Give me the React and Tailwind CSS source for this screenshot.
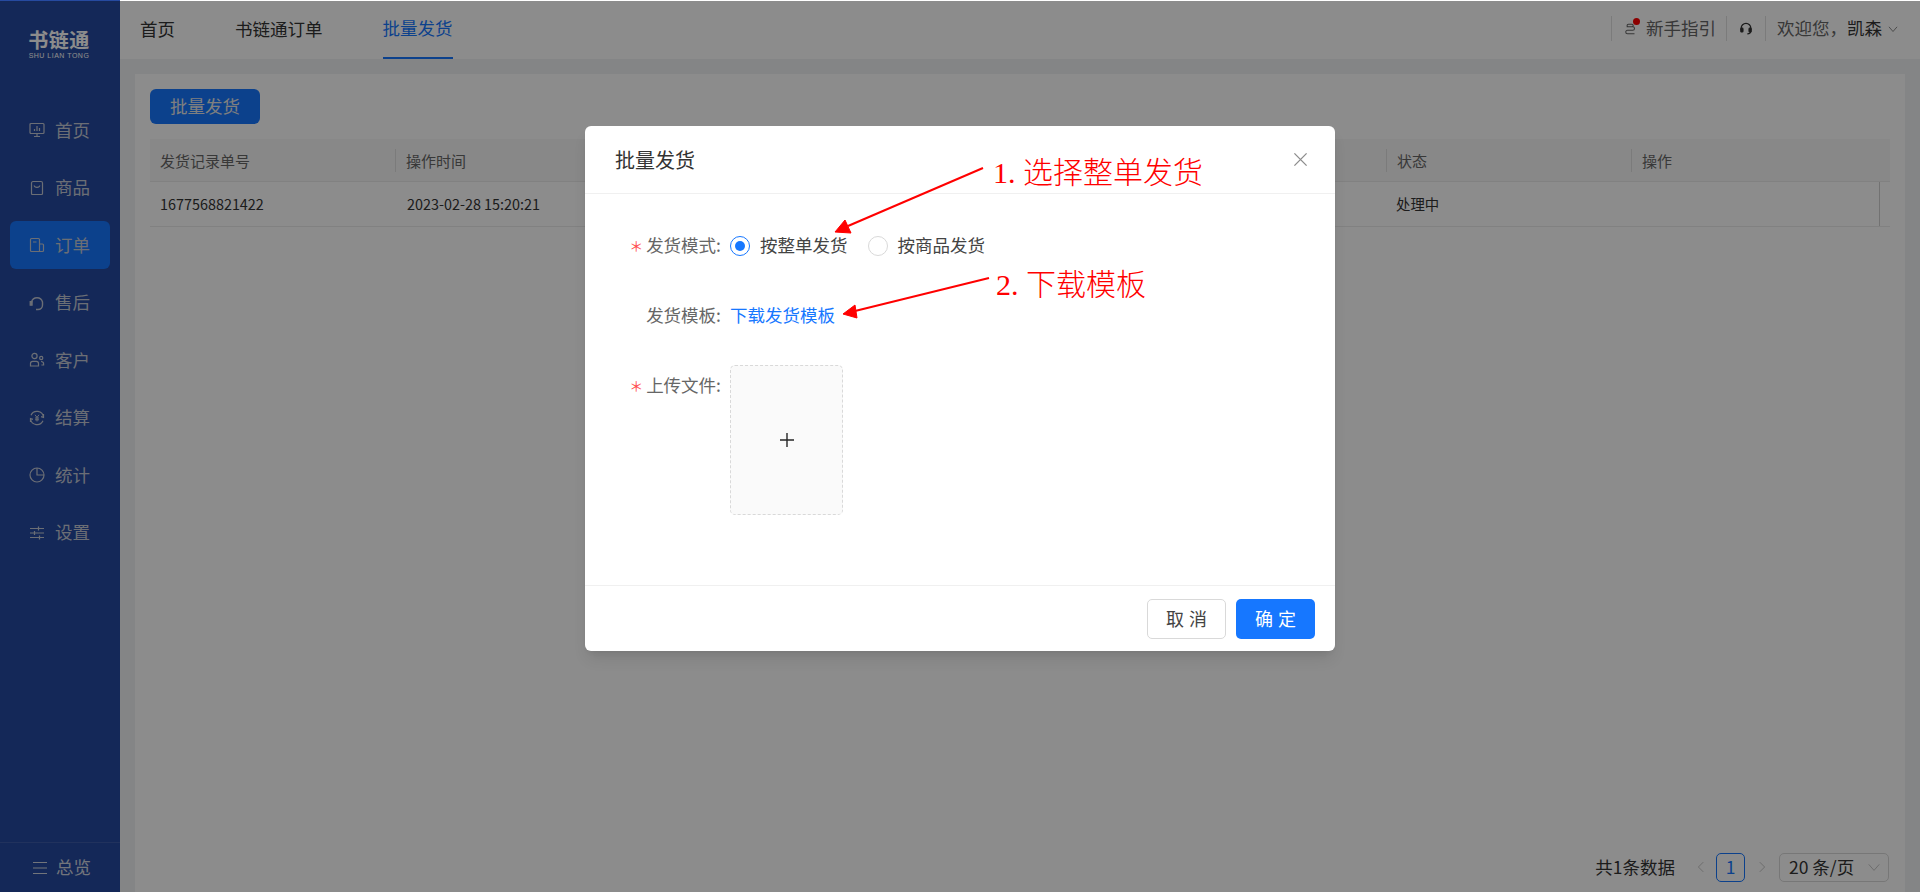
import React from "react";

const I = ({ children, className = "" }) => (
  <svg viewBox="0 0 16 16" fill="none" stroke="currentColor" strokeWidth="1.2" className={className}>{children}</svg>
);

const nav = [
  ["首页", <><rect x="1" y="1.5" width="14" height="10" rx="1" /><path d="M5 14.5h6M8 11.5v3M5.5 9V7M8 9V4M10.5 9V6" /></>],
  ["商品", <><path d="M2.5 3.2c0-.9.6-1.7 1.5-1.7h8c.9 0 1.5.8 1.5 1.7v10.3c0 .6-.4 1-1 1h-9c-.6 0-1-.4-1-1z" /><path d="M5.2 5.5c.4 2.4 5.2 2.4 5.6 0" /></>],
  ["订单", <><path d="M10.5 14.5h-8c-.6 0-1-.4-1-1v-11c0-.6.4-1 1-1h7c.6 0 1 .4 1 1z" /><path d="M10.5 7h3c.6 0 1 .4 1 1v5.5c0 .6-.4 1-1 1h-3M4 5h3.5" /></>],
  ["售后", <><path d="M2.5 8V7a5.7 5.7 0 0 1 11 0v3c0 2.4-1.8 4.5-4.5 4.5H7" strokeWidth="1.4" /><path d="M2.8 6.6h-1.6v3.6h1.9V6.6z" fill="currentColor" /></>],
  ["客户", <><circle cx="5.5" cy="4" r="2.6" /><path d="M1.5 14v-2.5c0-1.3 1-2.2 2.2-2.2h3.6c1.2 0 2.2.9 2.2 2.2V14z" /><circle cx="12.2" cy="6" r="1.6" /><path d="M12 9.5c1.4 0 2.6.8 2.6 2.2v1.3h-2.2" /></>],
  ["结算", <><path d="M2 5.2A6.6 6.6 0 0 1 14.5 7M14 10.8A6.6 6.6 0 0 1 1.5 9" /><path d="M14.5 4v3.4l-2.4-.8M1.5 12V8.6l2.4.8" /><path d="M6 4.8l2 2.6 2-2.6M8 7.4v4M6 8h4M6 9.8h4" strokeWidth="1" /></>],
  ["统计", <><circle cx="8" cy="8" r="7" /><path d="M8 1v7h7" /></>],
  ["设置", <path d="M1 3.5h14M1 8h14M1 12.5h14M9.5 1.5v4M5.5 6v4M10.5 10.5v4" />],
];

function Sidebar() {
  return (
    <aside className="flex w-[120px] shrink-0 flex-col bg-[#264aa0]">
      <div className="flex h-[106px] shrink-0 flex-col items-center pt-[27px] pr-[2px] text-white">
        <div className="text-[20px] leading-[25px] font-bold tracking-[0.5px]">书链通</div>
        <div className="text-[7px] leading-[8px] tracking-[0.5px] font-['Liberation_Sans',sans-serif]">SHU LIAN TONG</div>
      </div>
      <nav className="flex flex-1 flex-col gap-[9.5px]">
        {nav.map(([t, icon]) => (
          <div key={t} className={`mx-[10px] flex h-[48px] items-center gap-[10px] rounded-[6px] pl-[19px] text-[17.5px] text-[#c4c9d6] ${t === "订单" ? "bg-[#1677ff]" : ""}`}>
            <I className="h-[16px] w-[16px] shrink-0">{icon}</I>
            <span>{t}</span>
          </div>
        ))}
      </nav>
      <div className="flex h-[50px] shrink-0 items-center gap-[8px] border-t border-white/10 pl-[32px] text-[17.5px] text-[#d0d5e0]">
        <I className="h-[16px] w-[16px]"><path d="M1 2.5h14M1 8h14M1 13.5h14" /></I>
        <span>总览</span>
      </div>
    </aside>
  );
}

function TopBar() {
  return (
    <header className="flex h-[59px] shrink-0 items-start bg-white pl-[20px] text-[17.5px]">
      <div className="flex h-[59px] items-center text-[#333]">
        <span className="flex h-full items-center">首页</span>
        <span className="ml-[60px] flex h-full items-center">书链通订单</span>
        <span className="ml-[60px] flex h-full items-center border-b-[2px] border-[#1677ff] text-[#1677ff]">批量发货</span>
      </div>
      <div className="ml-auto flex h-[25px] mt-[16px] items-center pr-[22px] text-[#666]">
        <div className="relative flex h-full items-center border-l border-[#e0e0e0] pl-[12px] pr-[10px]">
          <I className="mr-[8px] h-[14px] w-[14px]"><path d="M3 5.5h7a2 2 0 0 1 0 4H4a2 2 0 0 0 0 4h8M5 2.5h4a1.5 1.5 0 0 1 0 3H5a1.5 1.5 0 0 1 0-3z" /></I>
          <span className="absolute left-[21px] top-[2px] h-[7px] w-[7px] rounded-full bg-[#ff0000]" />
          <span>新手指引</span>
        </div>
        <div className="flex h-full items-center border-x border-[#e0e0e0] px-[12px] text-[#333]">
          <I className="h-[14px] w-[14px]"><path d="M2.5 9V7a5.5 5.5 0 0 1 11 0v2M13.5 10c0 2-1.5 3.5-4 3.5" strokeWidth="1.4" /><rect x="2" y="7" width="2.6" height="4.5" rx="1" fill="currentColor" /><rect x="11.4" y="7" width="2.6" height="4.5" rx="1" fill="currentColor" /></I>
        </div>
        <div className="flex items-center pl-[11px]">
          <span>欢迎您，</span>
          <span className="text-[#333]">凯森</span>
          <I className="ml-[6px] h-[10px] w-[10px]"><path d="M1.5 4.5L8 12l6.5-7.5" /></I>
        </div>
      </div>
    </header>
  );
}

function Page() {
  return (
    <main className="flex min-w-0 flex-1 flex-col bg-[#f0f2f5]">
      <TopBar />
      <section className="mx-[15px] mt-[15px] flex flex-1 flex-col bg-white px-[15px] pt-[15px]">
        <button className="h-[35px] w-[110px] rounded-[6px] bg-[#1677ff] text-[17.5px] text-[#e8e8e8]">批量发货</button>
        <div className="mt-[15px] grid h-[43px] w-[1740px] grid-cols-[246px_990px_246px_258px] items-center border-b border-[#ececec] bg-[#f8f8f8] text-[15px] text-[#666]">
          <div className="h-[23px] border-r border-[#e0e0e0] pl-[10px] leading-[23px]">发货记录单号</div>
          <div className="pl-[10px] leading-[23px]">操作时间</div>
          <div className="h-[23px] border-x border-[#e0e0e0] pl-[10px] leading-[23px]">状态</div>
          <div className="h-[23px] pl-[10px] leading-[23px]">操作</div>
        </div>
        <div className="grid h-[45px] w-[1740px] grid-cols-[246px_990px_246px_258px] items-center border-b border-[#ececec] text-[14.4px] text-[#333]">
          <div className="pl-[10px]">1677568821422</div>
          <div className="pl-[11px]">2023-02-28 15:20:21</div>
          <div className="pl-[10px]">处理中</div>
          <div className="mr-[10px] h-full border-r border-[#cfcfcf]" />
        </div>
        <div className="mt-auto flex h-[50px] items-center justify-end pr-[1px] text-[17.5px] text-[#333]">
          <span>共1条数据</span>
          <I className="ml-[20px] h-[12px] w-[12px] text-[#bfbfbf]"><path d="M11 1.5L4.5 8l6.5 6.5" /></I>
          <span className="ml-[9px] flex h-[29px] w-[29px] items-center justify-center rounded-[5px] border border-[#1677ff] text-[#1677ff]">1</span>
          <I className="ml-[11px] h-[12px] w-[12px] text-[#bfbfbf]"><path d="M5 1.5L11.5 8 5 14.5" /></I>
          <span className="ml-[11px] flex h-[29px] w-[110px] items-center justify-between rounded-[5px] border border-[#d9d9d9] pl-[9px] pr-[8px]">
            <span>20 条/页</span>
            <I className="h-[12px] w-[12px] text-[#bfbfbf]"><path d="M1 4.5L8 12.5 15 4.5" /></I>
          </span>
        </div>
      </section>
    </main>
  );
}

const Req = () => <span className="mr-[3px] text-[14px] text-[#ff4d4f]">＊</span>;

function Modal() {
  return (
    <div className="relative flex h-[525px] w-[750px] flex-col rounded-[6px] bg-white text-[17.5px] shadow-lg">
      <div className="flex h-[68px] shrink-0 items-center justify-between border-b border-[#f0f0f0] pl-[30px] pr-[27px]">
        <span className="text-[20px] text-[#333]">批量发货</span>
        <I className="h-[15px] w-[15px] text-[#8c8c8c]"><path d="M1.5 1.5l13 13M14.5 1.5l-13 13" strokeWidth="1.4" /></I>
      </div>
      <div className="flex-1">
        <div className="mt-[34px] flex h-[35px] items-center">
          <div className="mr-[10px] flex w-[136px] shrink-0 items-center justify-end text-[#666]"><Req />发货模式:</div>
          <span className="-ml-px flex h-[20px] w-[20px] items-center justify-center rounded-full border border-[#1677ff]"><span className="h-[10px] w-[10px] rounded-full bg-[#1677ff]" /></span>
          <span className="ml-[10px] text-[#444]">按整单发货</span>
          <span className="ml-[20px] h-[20px] w-[20px] rounded-full border border-[#d9d9d9]" />
          <span className="ml-[10px] text-[#444]">按商品发货</span>
        </div>
        <div className="mt-[35px] flex h-[35px] items-center">
          <div className="mr-[9px] w-[136px] shrink-0 text-right text-[#666]">发货模板:</div>
          <span className="text-[#1677ff]">下载发货模板</span>
        </div>
        <div className="mt-[32px] flex items-start">
          <div className="mr-[9px] flex h-[40px] w-[136px] shrink-0 items-center justify-end text-[#666]"><Req />上传文件:</div>
          <div className="flex h-[150px] w-[113px] items-center justify-center rounded-[5px] border border-dashed border-[#d9d9d9] bg-[#fafafa] text-[#262626]">
            <svg viewBox="0 0 14 14" className="h-[14px] w-[14px]" stroke="currentColor" strokeWidth="1.4"><path d="M0 7h14M7 0v14" /></svg>
          </div>
        </div>
      </div>
      <div className="flex h-[66px] shrink-0 items-center justify-end gap-[10px] border-t border-[#f0f0f0] pr-[20px]">
        <button className="h-[40px] w-[79px] rounded-[5px] border border-[#d9d9d9] bg-white pl-[5px] text-[18px] tracking-[5px] text-[#444]">取消</button>
        <button className="h-[40px] w-[79px] rounded-[5px] bg-[#1677ff] pl-[5px] text-[18px] tracking-[5px] text-white">确定</button>
      </div>
    </div>
  );
}

function Arrows() {
  return (
    <>
      <svg className="absolute left-0 top-0 h-[892px] w-[1920px]" viewBox="0 0 1920 892" fill="none">
        <path d="M983 168L848 226" stroke="#ff0000" strokeWidth="2" />
        <path d="M835 232L845 220L851 233Z" fill="#ff0000" stroke="#ff0000" />
        <path d="M989 278L855 311" stroke="#ff0000" strokeWidth="2" />
        <path d="M843 314L855 305L857 318Z" fill="#ff0000" stroke="#ff0000" />
      </svg>
      <div className="absolute left-[993px] top-[153px] text-[30px] leading-[40px] whitespace-nowrap text-[#ff0000] font-['Liberation_Serif','Noto_Sans_CJK_SC',serif] font-light">1. 选择整单发货</div>
      <div className="absolute left-[996px] top-[265px] text-[30px] leading-[40px] whitespace-nowrap text-[#ff0000] font-['Liberation_Serif','Noto_Sans_CJK_SC',serif] font-light">2. 下载模板</div>
    </>
  );
}

export default function App() {
  return (
    <div className="relative h-[892px] w-[1920px] overflow-hidden bg-white font-['Noto_Sans_CJK_SC',sans-serif]">
      <div className="flex h-full">
        <Sidebar />
        <Page />
      </div>
      <div className="absolute inset-x-0 bottom-0 top-px flex justify-center bg-black/45 pt-[125px]">
        <Modal />
      </div>
      <Arrows />
    </div>
  );
}
